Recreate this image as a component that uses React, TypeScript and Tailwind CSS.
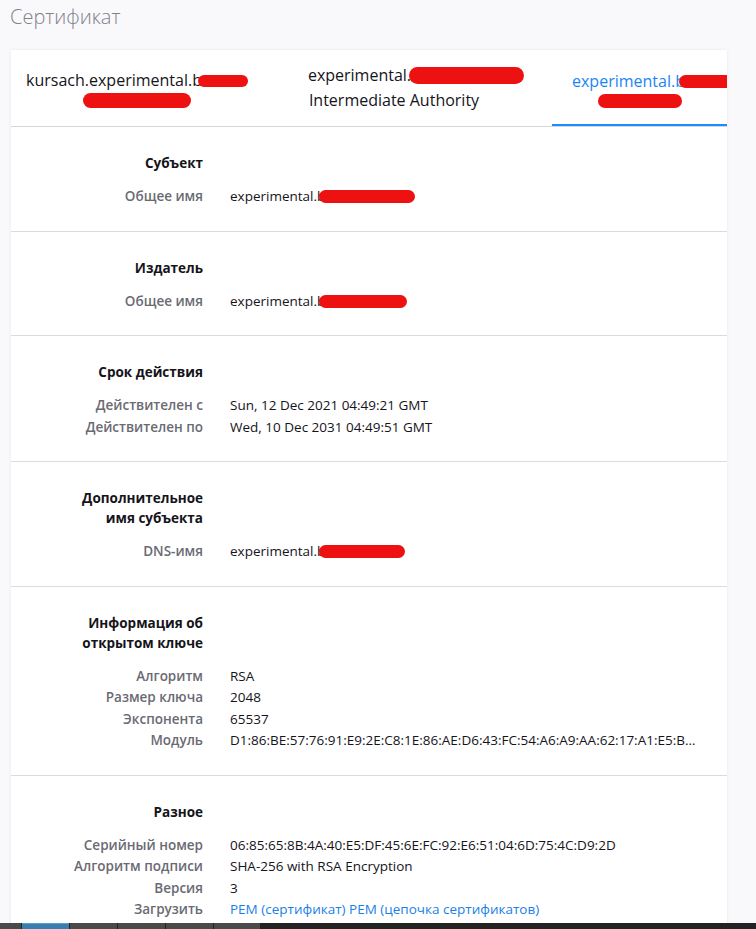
import type { ReactNode } from "react";

const font = { fontFamily: '"Open Sans", "Noto Sans", sans-serif' };

function Blot({ w, h = 14, className = "" }: { w: number; h?: number; className?: string }) {
  return (
    <span
      className={`inline-block align-middle rounded-full bg-[#ee1111] blur-[0.4px] ${className}`}
      style={{ width: w, height: h }}
    />
  );
}

type Row = { label: string; value: ReactNode };

function Section({ title, rows, last }: { title: ReactNode; rows: Row[]; last?: boolean }) {
  return (
    <section className={`pt-[26px] pb-[23px] ${last ? "" : "border-b border-[#dcdce0]"}`}>
      <div className="flex mb-[13px]">
        <h3 className="w-[192px] shrink-0 text-right text-[13.5px] leading-5 font-bold text-[#15141a]">
          {title}
        </h3>
      </div>
      {rows.map((r) => (
        <div key={r.label} className="flex text-[13.5px] leading-[21.5px]">
          <div className="w-[192px] shrink-0 text-right font-semibold text-[#6a6a73]">{r.label}</div>
          <div className="ml-[27px] pr-[28px] min-w-0 truncate text-[#15141a]">{r.value}</div>
        </div>
      ))}
    </section>
  );
}

function Tab({ children, width, active }: { children: ReactNode; width: string; active?: boolean }) {
  return (
    <div
      className={`${width} shrink-0 flex flex-col items-center justify-center text-center text-[16px] leading-[25px] whitespace-nowrap ${
        active ? "text-[#1a86f5] shadow-[inset_0_-2px_0_#1a8cff]" : "text-[#15141a]"
      }`}
    >
      {children}
    </div>
  );
}

export default function App() {
  const redacted = (w: number) => (
    <span className="inline-flex items-center">
      experimental.b
      <Blot w={w} h={13} className="-ml-[6px]" />
    </span>
  );

  return (
    <div className="h-[929px] flex flex-col overflow-hidden bg-[#f9f9fb]" style={font}>
      <div className="flex-1 min-h-0 overflow-hidden">
        <h1 className="pt-[3px] pl-[10px] text-[20px] leading-[28px] font-light text-[#80808a]">Сертификат</h1>

        <div className="mt-[19px] ml-[11px] w-[716px] bg-white shadow-[0_0_3px_rgba(0,0,0,0.08)]">
          <div className="flex h-[77px] border-b border-[#d7d7db] overflow-hidden">
            <Tab width="w-[252px]">
              <span className="inline-flex items-center">
                kursach.experimental.b
                <Blot w={50} h={12} className="-ml-[4px]" />
              </span>
              <Blot w={108} h={15} />
            </Tab>
            <Tab width="w-[262px]">
              <span className="inline-flex items-center pl-[44px]">
                experimental.l
                <Blot w={115} h={17} className="-ml-[6px]" />
              </span>
              <span>Intermediate Authority</span>
            </Tab>
            <div className="w-[27px] shrink-0" />
            <Tab width="w-[175px]" active>
              <span className="self-start inline-flex items-center pl-[20px]">
                experimental.b
                <Blot w={50} h={13} className="-ml-[6px] rounded-r-none" />
              </span>
              <Blot w={84} h={14} />
            </Tab>
          </div>

          <Section title="Субъект" rows={[{ label: "Общее имя", value: redacted(96) }]} />
          <Section title="Издатель" rows={[{ label: "Общее имя", value: redacted(88) }]} />
          <Section
            title="Срок действия"
            rows={[
              { label: "Действителен с", value: "Sun, 12 Dec 2021 04:49:21 GMT" },
              { label: "Действителен по", value: "Wed, 10 Dec 2031 04:49:51 GMT" },
            ]}
          />
          <Section
            title={
              <>
                Дополнительное
                <br />
                имя субъекта
              </>
            }
            rows={[{ label: "DNS-имя", value: redacted(86) }]}
          />
          <Section
            title={
              <>
                Информация об
                <br />
                открытом ключе
              </>
            }
            rows={[
              { label: "Алгоритм", value: "RSA" },
              { label: "Размер ключа", value: "2048" },
              { label: "Экспонента", value: "65537" },
              {
                label: "Модуль",
                value:
                  "D1:86:BE:57:76:91:E9:2E:C8:1E:86:AE:D6:43:FC:54:A6:A9:AA:62:17:A1:E5:B4:9C:3D:22:7F:10:8B:CE:91",
              },
            ]}
          />
          <Section
            title="Разное"
            last
            rows={[
              { label: "Серийный номер", value: "06:85:65:8B:4A:40:E5:DF:45:6E:FC:92:E6:51:04:6D:75:4C:D9:2D" },
              { label: "Алгоритм подписи", value: "SHA-256 with RSA Encryption" },
              { label: "Версия", value: "3" },
              {
                label: "Загрузить",
                value: (
                  <span className="text-[#1a7fe8]">
                    <a href="#">PEM (сертификат)</a> <a href="#">PEM (цепочка сертификатов)</a>
                  </span>
                ),
              },
            ]}
          />
        </div>
      </div>

      {/* taskbar strip at the bottom edge */}
      <div className="h-[6px] shrink-0 flex bg-[#232323]">
        <div className="w-[21px] bg-[#4a4a4a]" />
        <div className="ml-px w-[47px] bg-[#3a7eb0] border-t border-[#5aa0d0]" />
        <div className="ml-px w-[47px] bg-[#4a4a4a]" />
        <div className="ml-px w-[47px] bg-[#4a4a4a]" />
        <div className="ml-px w-[47px] bg-[#4a4a4a]" />
        <div className="ml-px w-[46px] bg-[#4a4a4a]" />
      </div>
    </div>
  );
}
